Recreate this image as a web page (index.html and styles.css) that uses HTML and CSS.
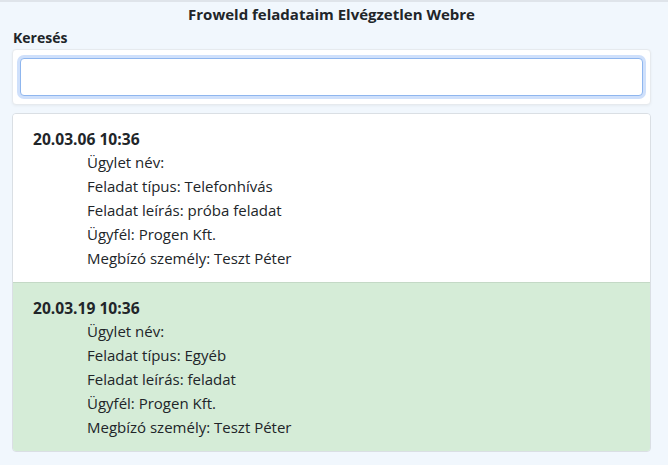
FILE: index.html
```html
<!DOCTYPE html>
<html lang="hu">
<head>
<meta charset="utf-8">
<link rel="stylesheet" href="styles.css">
</head>
<body>
<div class="page">
  <h1 class="title">Froweld feladataim Elvégzetlen Webre</h1>
  <label class="label" for="q">Keresés</label>
  <div class="search-card">
    <input id="q" class="search-input" type="text">
  </div>
  <div class="list">
    <div class="item">
      <div class="date">20.03.06 10:36</div>
      <div class="fields">
        <div class="field">Ügylet név:</div>
        <div class="field">Feladat típus: Telefonhívás</div>
        <div class="field">Feladat leírás: próba feladat</div>
        <div class="field">Ügyfél: Progen Kft.</div>
        <div class="field">Megbízó személy: Teszt Péter</div>
      </div>
    </div>
    <div class="item item-done">
      <div class="date">20.03.19 10:36</div>
      <div class="fields">
        <div class="field">Ügylet név:</div>
        <div class="field">Feladat típus: Egyéb</div>
        <div class="field">Feladat leírás: feladat</div>
        <div class="field">Ügyfél: Progen Kft.</div>
        <div class="field">Megbízó személy: Teszt Péter</div>
      </div>
    </div>
  </div>
</div>
</body>
</html>
```
FILE: styles.css
```css
html, body {
  margin: 0;
  padding: 0;
}
body {
  background: #f1f7fd;
  font-family: "Open Sans", "Noto Sans", sans-serif;
  color: #212529;
  border-top: 2px solid #dfe4ea;
}
.page {
  padding: 0 17px 0 12px;
  display: flex;
  flex-direction: column;
}
.title {
  margin: 0;
  text-align: center;
  font-size: 15px;
  font-weight: 700;
  line-height: 24px;
  height: 26px;
}
.label {
  font-size: 14px;
  font-weight: 700;
  line-height: 20px;
  margin-left: 1px;
  height: 21px;
}
.search-card {
  background: #fff;
  border: 1px solid #e6eaee;
  border-radius: 4px;
  padding: 8px 7px;
  box-shadow: 0 1px 3px rgba(0,0,0,0.05);
}
.search-input {
  display: block;
  box-sizing: border-box;
  width: 100%;
  height: 38px;
  margin: 0;
  border: 1px solid #8fb6ee;
  border-radius: 4px;
  outline: none;
  box-shadow: 0 0 0 3px #cfe0fb;
  background: #fff;
}
.list {
  margin-top: 8px;
  border: 1px solid #dadfe4;
  border-radius: 4px;
  overflow: hidden;
}
.item {
  background: #fff;
  padding: 14px 20px 12px 20px;
  font-size: 15px;
}
.item-done {
  background: #d5ecd7;
  border-top: 1px solid #c4d9c6;
}
.date {
  font-weight: 700;
  font-size: 15.6px;
  line-height: 22px;
}
.fields {
  padding-left: 54px;
}
.field {
  line-height: 24px;
}
```
